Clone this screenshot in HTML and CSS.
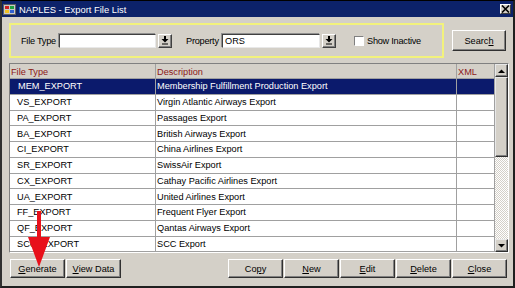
FILE: index.html
```html
<!DOCTYPE html>
<html>
<head>
<meta charset="utf-8">
<title>NAPLES - Export File List</title>
<link rel="stylesheet" href="styles.css">
</head>
<body>
<div class="window">
  <div class="titlebar">
    <svg class="app-icon" width="14" height="13" viewBox="0 0 14 13">
      <rect x="0.5" y="1.5" width="12" height="10" fill="#c8c8c8" stroke="#606060"/>
      <rect x="2" y="3" width="4" height="3" fill="#d02020"/>
      <rect x="7" y="3" width="4" height="3" fill="#20a040"/>
      <rect x="2" y="7" width="4" height="3" fill="#f0c020"/>
      <rect x="7" y="7" width="4" height="3" fill="#3060d0"/>
    </svg>
    <span class="title">NAPLES - Export File List</span>
    <div class="close-btn">
      <svg width="9" height="8" viewBox="0 0 9 8"><path d="M1 0.5 L8 7.5 M8 0.5 L1 7.5" stroke="#000" stroke-width="1.6"/></svg>
    </div>
  </div>

  <div class="content">
    <div class="filter-row">
      <div class="filter-box">
        <span class="lbl lbl-ft">File Type</span>
        <div class="field field-ft"></div>
        <div class="dd-btn"><svg width="8" height="9" viewBox="0 0 8 9"><rect x="3" y="0" width="2" height="3" fill="#000"/><path d="M0.5 3 H7.5 L4 6.5 Z" fill="#000"/><rect x="1" y="7.5" width="6" height="1" fill="#000"/></svg></div>
        <span class="lbl lbl-prop">Property</span>
        <div class="field field-prop">ORS</div>
        <div class="dd-btn"><svg width="8" height="9" viewBox="0 0 8 9"><rect x="3" y="0" width="2" height="3" fill="#000"/><path d="M0.5 3 H7.5 L4 6.5 Z" fill="#000"/><rect x="1" y="7.5" width="6" height="1" fill="#000"/></svg></div>
        <div class="check"></div>
        <span class="lbl lbl-check">Show Inactive</span>
      </div>
      <div class="btn btn-search">Searc<u>h</u></div>
    </div>

    <div class="grid-frame">
      <div class="grid">
        <div class="row head">
          <div class="cell c1">File Type</div>
          <div class="cell c2">Description</div>
          <div class="cell c3">XML</div>
        </div>
        <div class="row selected">
          <div class="cell c1">MEM_EXPORT</div>
          <div class="cell c2">Membership Fulfillment Production Export</div>
          <div class="cell c3"></div>
        </div>
        <div class="row">
          <div class="cell c1">VS_EXPORT</div>
          <div class="cell c2">Virgin Atlantic Airways Export</div>
          <div class="cell c3"></div>
        </div>
        <div class="row">
          <div class="cell c1">PA_EXPORT</div>
          <div class="cell c2">Passages Export</div>
          <div class="cell c3"></div>
        </div>
        <div class="row">
          <div class="cell c1">BA_EXPORT</div>
          <div class="cell c2">British Airways Export</div>
          <div class="cell c3"></div>
        </div>
        <div class="row">
          <div class="cell c1">CI_EXPORT</div>
          <div class="cell c2">China Airlines Export</div>
          <div class="cell c3"></div>
        </div>
        <div class="row">
          <div class="cell c1">SR_EXPORT</div>
          <div class="cell c2">SwissAir Export</div>
          <div class="cell c3"></div>
        </div>
        <div class="row">
          <div class="cell c1">CX_EXPORT</div>
          <div class="cell c2">Cathay Pacific Airlines Export</div>
          <div class="cell c3"></div>
        </div>
        <div class="row">
          <div class="cell c1">UA_EXPORT</div>
          <div class="cell c2">United Airlines Export</div>
          <div class="cell c3"></div>
        </div>
        <div class="row">
          <div class="cell c1">FF_EXPORT</div>
          <div class="cell c2">Frequent Flyer Export</div>
          <div class="cell c3"></div>
        </div>
        <div class="row">
          <div class="cell c1">QF_EXPORT</div>
          <div class="cell c2">Qantas Airways Export</div>
          <div class="cell c3"></div>
        </div>
        <div class="row">
          <div class="cell c1">SCC_EXPORT</div>
          <div class="cell c2">SCC Export</div>
          <div class="cell c3"></div>
        </div>
      </div>
      <div class="scrollbar">
        <div class="sb-btn"><svg width="7" height="4" viewBox="0 0 7 4"><path d="M0 4 H7 L3.5 0.5 Z" fill="#000"/></svg></div>
        <div class="sb-thumb"></div>
        <div class="sb-track"></div>
        <div class="sb-btn"><svg width="7" height="4" viewBox="0 0 7 4"><path d="M0 0 H7 L3.5 3.5 Z" fill="#000"/></svg></div>
      </div>
    </div>

    <div class="button-bar">
      <div class="btn"><u>G</u>enerate</div>
      <div class="btn"><u>V</u>iew Data</div>
      <div class="spacer"></div>
      <div class="btn">Co<u>p</u>y</div>
      <div class="btn"><u>N</u>ew</div>
      <div class="btn"><u>E</u>dit</div>
      <div class="btn"><u>D</u>elete</div>
      <div class="btn"><u>C</u>lose</div>
    </div>
  </div>

  <svg class="callout-arrow" width="24" height="58" viewBox="0 0 24 58">
    <rect x="10" y="0" width="4" height="28" fill="#e8101a"/>
    <path d="M1 26 H23 L12 56 Z" fill="#e8101a"/>
  </svg>
</div>
</body>
</html>
```

FILE: styles.css
```css
* { box-sizing: border-box; }
html, body { margin: 0; padding: 0; background: #ffffff; }
body {
  font-family: "Liberation Sans", Arial, sans-serif;
  font-size: 9.2px;
  color: #000;
}
u { text-decoration: underline; text-underline-offset: 1px; }

.window {
  position: relative;
  width: 515px;
  height: 288px;
  background: #d4d0c8;
  border-style: solid;
  border-width: 1px 2px 2px 2px;
  border-color: #000 #202020 #202020 #303030;
  display: flex;
  flex-direction: column;
  overflow: hidden;
}

/* title bar */
.titlebar {
  height: 16px;
  background: #0c226a;
  display: flex;
  align-items: center;
  padding-left: 1px;
  flex: none;
}
.app-icon { flex: none; margin-right: 2px; }
.title { color: #fff; font-size: 9.4px; }
.close-btn {
  margin-left: auto;
  margin-right: 2px;
  width: 11px;
  height: 10px;
  background: #d4d0c8;
  border: 1px solid;
  border-color: #fff #404040 #404040 #fff;
  display: flex;
  align-items: center;
  justify-content: center;
}

/* content */
.content {
  flex: 1;
  display: flex;
  flex-direction: column;
  padding: 6px 4px 0 7px;
}

.filter-row {
  display: flex;
  align-items: center;
  height: 35px;
  flex: none;
}
.filter-box {
  width: 435px;
  height: 35px;
  border: 2px solid #f2f27c;
  display: flex;
  align-items: center;
  padding-left: 10px;
}
.lbl { white-space: nowrap; letter-spacing: -0.25px; }
.lbl-ft { width: 38px; }
.lbl-prop { width: 36px; margin-left: 14px; }
.lbl-check { margin-left: 3px; }

.field {
  height: 14px;
  background: #fff;
  border: 1px solid;
  border-color: #404040 #e8e8e8 #e8e8e8 #404040;
  box-shadow: -1px -1px 0 #909090;
  padding-left: 2px;
  line-height: 12px;
}
.field-ft { width: 97px; }
.field-prop { width: 98px; }

.dd-btn {
  width: 14px;
  height: 14px;
  margin-left: 2px;
  background: #d4d0c8;
  border: 1px solid;
  border-color: #fff #404040 #404040 #fff;
  box-shadow: inset -1px -1px 0 #808080;
  display: flex;
  align-items: center;
  justify-content: center;
}

.check {
  width: 10px;
  height: 10px;
  margin-left: 18px;
  background: #fff;
  border: 1px solid;
  border-color: #808080 #fff #fff #808080;
}

.btn {
  width: 55px;
  height: 19px;
  background: #d4d0c8;
  border: 1px solid;
  border-color: #fff #303030 #303030 #fff;
  box-shadow: inset -1px -1px 0 #808080;
  display: flex;
  align-items: center;
  justify-content: center;
  white-space: nowrap;
  flex: none;
}
.btn-search { margin-left: 8px; width: 54px; height: 21px; }

/* grid */
.grid-frame {
  margin-top: 5px;
  width: 500px;
  height: 190px;
  border: 1px solid;
  border-color: #808080 #fff #fff #808080;
  display: flex;
  flex: none;
  overflow: hidden;
}
.grid {
  width: 485px;
  background: #fff;
  overflow: hidden;
}
.row {
  display: grid;
  grid-template-columns: 146px 301px 38px;
  height: 15.75px;
}
.row.head {
  height: 15px;
  background: #d4d0c8;
}
.cell {
  border-right: 1px solid #a0a0a0;
  border-bottom: 1px solid #a0a0a0;
  display: flex;
  align-items: center;
  white-space: nowrap;
  overflow: hidden;
}
.c1 { padding-left: 7px; }
.c2 { padding-left: 1px; }
.c3 { padding-left: 1px; }
.head .cell { color: #8c1818; padding-top: 2px; }
.head .c1 { padding-left: 1px; }
.selected { background: #0b1a6c; color: #fff; }
.selected .c1 { padding-left: 8px; }

.scrollbar {
  width: 13px;
  display: flex;
  flex-direction: column;
}
.sb-btn, .sb-thumb {
  background: #d4d0c8;
  border: 1px solid;
  border-color: #e8e8e8 #303030 #303030 #e8e8e8;
  box-shadow: inset -1px -1px 0 #808080;
}
.sb-btn {
  height: 13px;
  display: flex;
  align-items: center;
  justify-content: center;
  flex: none;
}
.sb-thumb { height: 80px; flex: none; }
.sb-track {
  flex: 1;
  background: repeating-conic-gradient(#ffffff 0 25%, #d4d0c8 0 50%) 0 0 / 2px 2px;
}

/* bottom buttons */
.button-bar {
  margin-top: 6px;
  display: flex;
  gap: 1px;
  padding-left: 1px;
  padding-right: 2px;
  flex: none;
}
.spacer { flex: 1; }

.callout-arrow {
  position: absolute;
  left: 25px;
  top: 210px;
}
```
